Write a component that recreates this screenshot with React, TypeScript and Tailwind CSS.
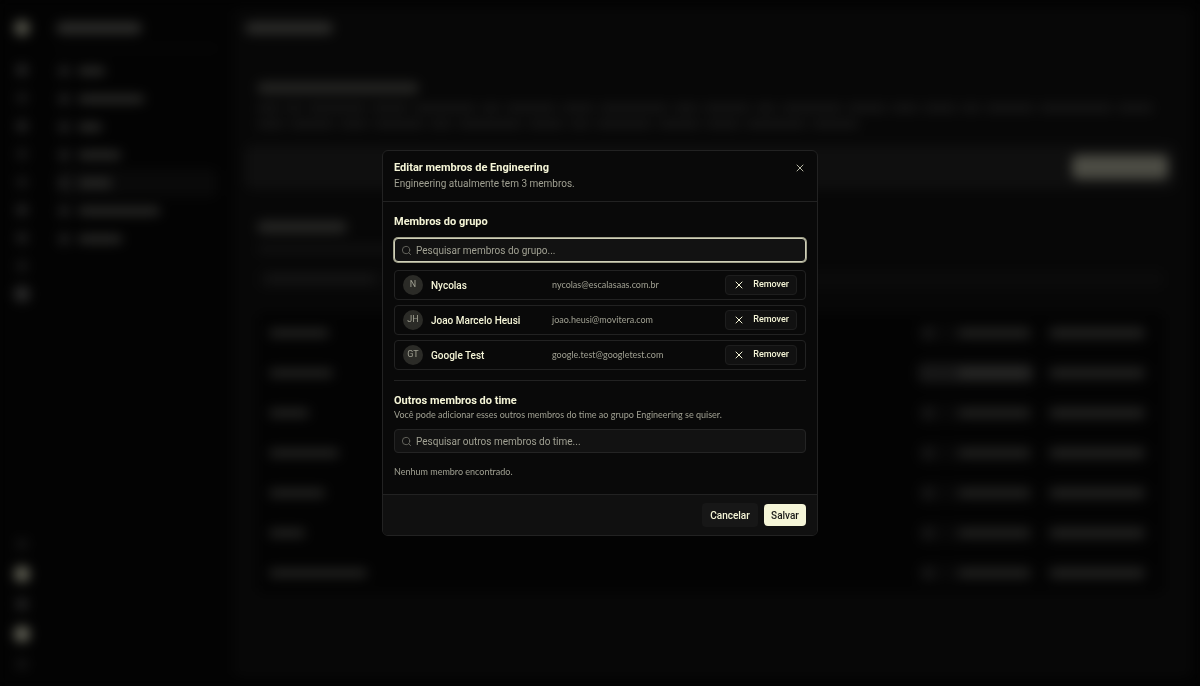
import { useState } from "react";
import { Search, X } from "lucide-react";
import clsx from "clsx";

const members = [
  { initials: "N", name: "Nycolas", email: "nycolas@escalasaas.com.br" },
  { initials: "JH", name: "Joao Marcelo Heusi", email: "joao.heusi@movitera.com" },
  { initials: "GT", name: "Google Test", email: "google.test@googletest.com" },
];

const railTop = [
  "bg-[#282828]",
  "bg-[#181818]",
  "bg-[#242424]",
  "bg-[#181818]",
  "bg-[#181818]",
  "bg-[#242424]",
  "bg-[#202020]",
  "bg-[#181818]",
];

const navItems = [
  { width: 27 },
  { width: 66 },
  { width: 24 },
  { width: 43 },
  { width: 34, active: true },
  { width: 82 },
  { width: 44 },
];

const intro = [
  [24, 18, 60, 38, 64, 20, 52, 34, 70, 26, 48, 22, 62, 40, 28, 34, 20, 50, 74, 36],
  [28, 46, 30, 52, 24, 66, 38, 22, 58, 44, 36, 62, 48],
];

const groups = [
  { width: 60 },
  { width: 64, active: true },
  { width: 40 },
  { width: 70 },
  { width: 56 },
  { width: 36 },
  { width: 98 },
];

const Bar = ({ width, className }: { width: number; className?: string }) => (
  <div className={clsx("h-2 shrink-0 rounded-full", className)} style={{ width }} />
);

const Backdrop = () => (
  <div aria-hidden="true" className="flex min-h-screen bg-[#030303] blur-[6px]">
    {/* Icon rail */}
    <div className="flex w-11 shrink-0 flex-col items-center justify-between pt-4 pb-4">
      <div className="flex flex-col items-center">
        <div className="mb-4 flex h-6 items-center">
          <div className="size-4 rounded-full bg-[#55554b]" />
        </div>
        {railTop.map((color, i) => (
          <div key={i} className="flex h-7 items-center">
            <div className={clsx("size-3 rounded-full", color)} />
          </div>
        ))}
        <div className="flex h-7 items-center">
          <div className="size-4 rounded-full bg-[#2c2c2c]" />
        </div>
      </div>
      <div className="flex flex-col items-center gap-4">
        <div className="size-3 rounded-full bg-[#141414]" />
        <div className="size-4 rounded-full bg-[#626256]" />
        <div className="size-3 rounded-full bg-[#282828]" />
        <div className="size-4 rounded-full bg-[#66665a]" />
        <div className="size-3 rounded-full bg-[#141414]" />
      </div>
    </div>

    {/* Settings navigation */}
    <div className="w-[189px] shrink-0 pt-4 pr-4 pl-3">
      <div className="flex h-6 items-center">
        <Bar width={86} className="h-3 bg-[#2c2c2a]" />
      </div>
      <div className="my-2 h-px bg-[#141414]" />
      {navItems.map((item, i) => (
        <div key={i} className={clsx("flex h-7 items-center gap-2 rounded-md pl-0.5", item.active && "bg-[#090909]")}>
          <div className="size-3 rounded-full bg-[#202020]" />
          <Bar width={item.width} className="bg-[#2c2c2a]" />
        </div>
      ))}
    </div>

    {/* Groups page */}
    <div className="my-2 mr-2 flex-1 rounded-lg bg-[#070707] pt-2 pr-4 pl-3">
      <div className="flex h-6 items-center">
        <Bar width={88} className="h-3 bg-[#2c2c2a]" />
      </div>
      <div className="mt-10 px-3">
        <div className="flex h-4 items-center">
          <Bar width={162} className="h-3 bg-[#242422]" />
        </div>
        <div className="mt-1">
          {intro.map((line, i) => (
            <div key={i} className="flex h-4 items-center gap-1 overflow-hidden">
              {line.map((width, j) => (
                <Bar key={j} width={width} className="bg-[#161616]" />
              ))}
            </div>
          ))}
        </div>
      </div>
      <div className="mt-[13px] flex h-11 items-center justify-end rounded-lg bg-[#0f0f0f] px-2">
        <div className="h-6 w-24 rounded-md bg-[#4c4c44]" />
      </div>
      <div className="mt-8 px-3">
        <Bar width={90} className="h-3 bg-[#262624]" />
        <Bar width={220} className="mt-3 bg-[#111]" />
        <div className="mt-4 flex h-5 items-center rounded-md bg-[#0a0a0a] px-2">
          <Bar width={110} className="bg-[#161616]" />
        </div>
        <div className="mt-6 rounded-lg bg-[#030303]">
          {groups.map((group, i) => (
            <div key={i} className="flex h-10 items-center justify-between pr-4 pl-3">
              <Bar width={group.width} className="bg-[#262624]" />
              <div className="flex items-center gap-3">
                <div className={clsx("flex h-5 items-center gap-6 rounded-md px-1", group.active ? "bg-[#161616]" : "bg-[#080808]")}>
                  <div className="size-3 rounded-full bg-[#181818]" />
                  <Bar width={72} className={group.active ? "bg-[#2c2c2a]" : "bg-[#242422]"} />
                </div>
                <div className="flex h-5 items-center rounded-md bg-[#080808] px-1">
                  <Bar width={94} className="bg-[#262624]" />
                </div>
              </div>
            </div>
          ))}
        </div>
      </div>
    </div>
  </div>
);

const SearchField = ({ label, autoFocus }: { label: string; autoFocus?: boolean }) => (
  <label className="flex h-6 items-center gap-1 rounded-sm border border-[#242424] bg-[#121212] px-1.5 focus-within:border-[#d0d0b8] focus-within:ring-1 focus-within:ring-[#a0a08a]">
    <Search className="size-[11px] shrink-0 text-[#6a6a62]" strokeWidth={2} />
    <input
      type="text"
      aria-label={label}
      placeholder={label}
      autoFocus={autoFocus}
      className="min-w-0 flex-1 bg-transparent text-[10px] text-[#f5f5d7] caret-transparent outline-none placeholder:text-[#a0a092]"
    />
  </label>
);

const App = () => {
  const [groupMembers, setGroupMembers] = useState(members);

  return (
    <div className="relative overflow-hidden bg-[#030303] font-[Roboto,sans-serif]">
      <Backdrop />

      <div className="fixed inset-0 flex items-center justify-center p-4">
        <div
          role="dialog"
          aria-modal="true"
          aria-labelledby="dialog-title"
          className="w-full max-w-[436px] overflow-hidden rounded-md border border-[#222] bg-[#090909] text-[#f5f5d7]"
        >
          <header className="flex items-start justify-between border-b border-[#222] px-[11px] py-[9px]">
            <div>
              <h2 id="dialog-title" className="text-[11px] leading-4 font-bold">Editar membros de Engineering</h2>
              <p className="text-[10px] leading-4 text-[#a0a092]">Engineering atualmente tem 3 membros.</p>
            </div>
            <button type="button" aria-label="Fechar" className="flex h-4 items-center text-[#b8b8a6]">
              <X className="size-3" strokeWidth={2} />
            </button>
          </header>

          <div className="px-[11px] pt-3 pb-[14px]">
            <h3 className="text-[11px] leading-4 font-bold">Membros do grupo</h3>
            <div className="mt-2">
              <SearchField label="Pesquisar membros do grupo..." autoFocus />
            </div>

            <ul className="mt-2 flex flex-col gap-[5px]">
              {groupMembers.map((member) => (
                <li key={member.email} className="flex h-[30px] items-center rounded-sm border border-[#222] px-2">
                  <span className="flex size-5 shrink-0 items-center justify-center rounded-full bg-[#2b2b27] text-[9px] text-[#a0a092]">
                    {member.initials}
                  </span>
                  <span className="ml-2 w-[121px] text-[10px] font-medium">{member.name}</span>
                  <span className="flex-1 font-[Lato,sans-serif] text-[9px] text-[#a0a092]">{member.email}</span>
                  <button
                    type="button"
                    onClick={() => setGroupMembers(groupMembers.filter((m) => m.email !== member.email))}
                    className="flex h-5 w-[72px] items-center justify-between rounded-sm border border-[#1e1e1e] bg-[#111] px-[7px] text-[9px] font-medium"
                  >
                    <X className="size-3" strokeWidth={2} />
                    Remover
                  </button>
                </li>
              ))}
            </ul>

            <hr className="mt-[10px] border-[#222]" />

            <h3 className="mt-3 text-[11px] leading-4 font-bold">Outros membros do time</h3>
            <p className="font-[Lato,sans-serif] text-[9px] leading-3 text-[#a0a092]">
              Você pode adicionar esses outros membros do time ao grupo Engineering se quiser.
            </p>
            <div className="mt-2">
              <SearchField label="Pesquisar outros membros do time..." />
            </div>
            <p className="mt-[11px] font-[Lato,sans-serif] text-[9px] leading-4 text-[#a0a092]">Nenhum membro encontrado.</p>
          </div>

          <footer className="flex items-center justify-end gap-1.5 border-t border-[#222] bg-[#101010] px-[11px] py-2">
            <button type="button" className="h-6 w-14 rounded-sm bg-[#171717] text-[10px] font-medium">
              Cancelar
            </button>
            <button type="button" className="h-[22px] w-[42px] rounded-sm bg-[#f5f5d7] text-[10px] font-medium text-[#171717]">
              Salvar
            </button>
          </footer>
        </div>
      </div>
    </div>
  );
};

export default App;
